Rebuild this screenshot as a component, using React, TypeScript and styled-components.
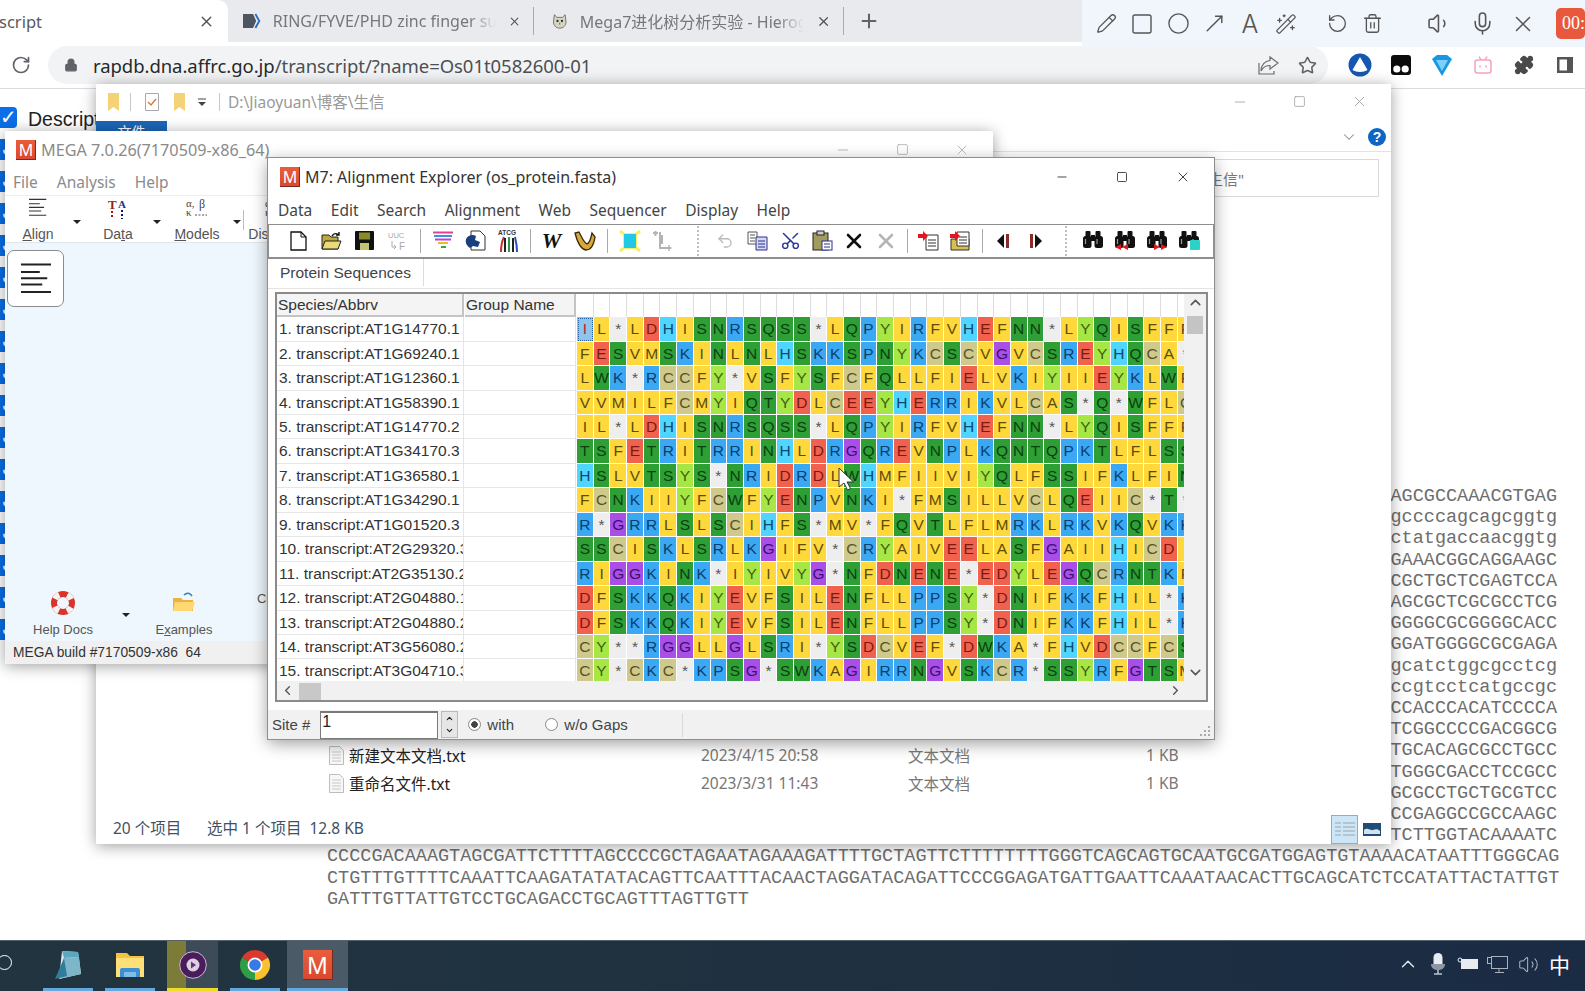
import React from "react";
import styled, { createGlobalStyle } from "styled-components";
import {
  Pencil, Square, Circle, MoveUpRight, WandSparkles, RotateCcw, Trash2, Volume1, Mic, X,
  RotateCw, Lock, Star, Puzzle, Plus, ChevronUp, ChevronDown, ChevronLeft, ChevronRight,
  Scissors, Undo2, Minus, Volume2,
} from "lucide-react";

const UI = `"Noto Sans", "Noto Sans CJK SC", sans-serif`;
const ARIAL = `"Liberation Sans", Arial, sans-serif`;

const GlobalStyle = createGlobalStyle`
  html, body { margin: 0; padding: 0; background: #fff; overflow: hidden; }
  * { box-sizing: border-box; }
`;

const Page = styled.div`
  position: relative;
  width: 1585px;
  height: 991px;
  overflow: hidden;
  display: flex;
  flex-direction: column;
  font-family: ${UI};
  background: #fff;
`;

/* browser chrome */
const TabStrip = styled.div`
  height: 42px;
  flex: none;
  background: #e8eaed;
  display: flex;
  align-items: stretch;
  color: #4d5156;
  font-size: 16px;
`;
const ActiveTab = styled.div`
  width: 228px;
  background: #fff;
  border-top-right-radius: 10px;
  display: flex;
  align-items: center;
  justify-content: space-between;
  padding-right: 13px;
  overflow: hidden;
  font-size: 16.5px;
  span { margin-left: -1px; color: #5a5a5a; }
`;
const Tab = styled.div<{ $w: number }>`
  width: ${(p) => p.$w}px;
  display: flex;
  align-items: center;
  padding: 0 12px 0 15px;
  gap: 12px;
  border-right: 1px solid #a8abb0;
  margin: 7px 0;
  color: #74777c;
  white-space: nowrap;
`;
const TabTitle = styled.span<{ $w: number }>`
  width: ${(p) => p.$w}px;
  overflow: hidden;
  flex: none;
  -webkit-mask-image: linear-gradient(90deg, #000 88%, transparent);
  mask-image: linear-gradient(90deg, #000 88%, transparent);
`;
const NewTab = styled.div`
  width: 50px;
  display: flex;
  align-items: center;
  justify-content: center;
  color: #5f6368;
`;
const RecorderBar = styled.div`
  position: absolute;
  top: 0;
  left: 1082px;
  width: 503px;
  height: 47px;
  background: #f1f5fc;
  display: flex;
  align-items: center;
  padding-left: 6px;
  color: #555;
  z-index: 8;
`;
const RecSlot = styled.div<{ $w?: number }>`
  width: ${(p) => p.$w ?? 36}px;
  flex: none;
  display: flex;
  align-items: center;
  justify-content: center;
  font: 300 25px Inter, sans-serif;
`;
const RecSep = styled.div<{ $l: number; $r: number }>`
  width: 1px;
  height: 22px;
  background: #d5d9e0;
  margin: 0 ${(p) => p.$r}px 0 ${(p) => p.$l}px;
`;
const RecTimer = styled.div`
  margin-left: 10px;
  width: 40px;
  height: 31px;
  border-radius: 5px;
  background: #e8583c;
  color: #fff;
  font: 18px "Liberation Serif", serif;
  display: flex;
  align-items: center;
  padding-left: 6px;
`;
const AddressRow = styled.div`
  height: 47px;
  flex: none;
  display: flex;
  align-items: center;
  background: #fff;
  border-bottom: 1px solid #dadce0;
`;
const ReloadSlot = styled.div`
  width: 48px;
  display: flex;
  justify-content: center;
  padding-right: 6px;
  color: #5f6368;
`;
const UrlPill = styled.div`
  width: 1282px;
  height: 38px;
  border-radius: 19px;
  background: #f1f3f4;
  display: flex;
  align-items: center;
  padding: 0 0 0 16px;
  color: #5f6368;
`;
const UrlText = styled.div`
  margin-left: 15px;
  flex: 1;
  font-size: 18.5px;
  letter-spacing: -0.05px;
  color: #27292c;
  span { color: #4c4f53; }
`;
const PillAction = styled.div<{ $w: number }>`
  width: ${(p) => p.$w}px;
  display: flex;
  justify-content: center;
`;
const ExtGroup = styled.div`
  display: flex;
  margin-left: 11px;
`;
const ExtSlot = styled.div`
  width: 41px;
  display: flex;
  justify-content: center;
  align-items: center;
  color: #4a4a4a;
`;

/* web page behind the windows */
const Content = styled.div`
  flex: 1;
  min-height: 0;
  display: flex;
  overflow: hidden;
`;
const CheckColumn = styled.div`
  width: 327px;
  flex: none;
  padding-top: 18px;
  display: flex;
  flex-direction: column;
  gap: 11px;
`;
const CheckRow = styled.div`
  display: flex;
  align-items: center;
  gap: 11px;
  height: 21px;
  font: 19.5px ${ARIAL};
  color: #222;
`;
const CheckLabel = styled.span`
  margin-top: 4px;
`;
const CheckBox = styled.div`
  width: 17px;
  height: 21px;
  border-radius: 0 4px 4px 0;
  background: #0a6fe8;
  flex: none;
  display: flex;
  align-items: center;
  justify-content: center;
  color: #fff;
`;
const SeqColumn = styled.div`
  width: 1230px;
  padding-top: 397px;
  font: 18.5px/21.2px "Liberation Mono", "Courier New", monospace;
  color: #6e6e6e;
  white-space: pre;
`;
const SeqLine = styled.div<{ $tail?: boolean }>`
  text-align: ${(p) => (p.$tail ? "right" : "left")};
`;
const ClippedHeading = styled.div`
  margin: 26px 0 0 2px;
  font: bold 20px ${ARIAL};
  color: #444;
`;

/* taskbar */
const Taskbar = styled.div`
  height: 51px;
  flex: none;
  background: linear-gradient(90deg, #21343f, #1f3140 50%, #1a2b44);
  border-top: 1px solid #55616a;
  display: flex;
  justify-content: space-between;
`;
const TaskLeft = styled.div`
  display: flex;
`;
const CortanaRing = styled.div`
  width: 15px;
  height: 15px;
  border: 1.3px solid #fff;
  border-radius: 50%;
  margin: 14px 31px 0 -3px;
`;
const TaskSlot = styled.div<{ $w: number; $ml?: number; $line: string; $bg?: string }>`
  width: ${(p) => p.$w}px;
  margin-left: ${(p) => p.$ml ?? 0}px;
  display: flex;
  align-items: center;
  justify-content: center;
  padding-top: 1px;
  background: ${(p) => p.$bg ?? "transparent"};
  border-bottom: 3px solid ${(p) => p.$line};
`;
const Tray = styled.div`
  display: flex;
  align-items: center;
  padding: 0 12px 4px 0;
  color: #e6e9ee;
`;
const TraySlot = styled.div`
  width: 30px;
  display: flex;
  justify-content: center;
  align-items: center;
`;
const ImeGlyph = styled.div`
  font: 21px "Noto Sans CJK SC", sans-serif;
  color: #fff;
  margin-left: 3px;
`;

/* desktop windows */
const Win = styled.div<{ $x: number; $y: number; $w: number; $h: number; $z: number; $shadow?: string }>`
  position: absolute;
  left: ${(p) => p.$x}px;
  top: ${(p) => p.$y}px;
  width: ${(p) => p.$w}px;
  height: ${(p) => p.$h}px;
  z-index: ${(p) => p.$z};
  background: #fff;
  display: flex;
  flex-direction: column;
  box-shadow: ${(p) => p.$shadow ?? "0 2px 14px rgba(0,0,0,.38)"};
`;
const Logo = styled.div<{ $s: number }>`
  width: ${(p) => p.$s}px;
  height: ${(p) => p.$s}px;
  flex: none;
  background: linear-gradient(180deg, #ea5d3c, #d8472f);
  color: #fff;
  font: ${(p) => Math.round(p.$s * 0.78)}px ${UI};
  line-height: ${(p) => p.$s}px;
  text-align: center;
  overflow: hidden;
  box-shadow: inset -1px -1px 0 #7a2a1a;
`;
const CtrlGroup = styled.div<{ $gap: number; $color: string }>`
  display: flex;
  align-items: center;
  gap: ${(p) => p.$gap}px;
  color: ${(p) => p.$color};
`;

/* explorer */
const ExpTitle = styled.div`
  height: 36px;
  flex: none;
  display: flex;
  align-items: center;
  padding: 0 23px 1px 9px;
  color: #999;
  font-size: 15.5px;
`;
const ExpPath = styled.div`
  flex: 1;
`;
const QuickSlot = styled.div<{ $w: number }>`
  width: ${(p) => p.$w}px;
  display: flex;
  justify-content: center;
  align-items: center;
`;
const TitleSep = styled.div`
  width: 1px;
  height: 18px;
  background: #c8c8c8;
`;
const RibbonRow = styled.div`
  height: 32px;
  flex: none;
  display: flex;
  justify-content: space-between;
  align-items: flex-end;
  border-bottom: 1px solid #e3e3e3;
  padding-right: 5px;
`;
const FileTab = styled.div`
  width: 71px;
  height: 30px;
  background: #1c66b8;
  color: #fff;
  text-align: center;
  font-size: 14px;
`;
const RibbonEnd = styled.div`
  display: flex;
  align-items: center;
  gap: 10px;
  margin-bottom: 5px;
  color: #8a8a8a;
`;
const HelpDot = styled.div`
  width: 18px;
  height: 18px;
  border-radius: 50%;
  background: #0c67c4;
  color: #fff;
  font: bold 14px/18px ${ARIAL};
  text-align: center;
`;
const SearchRow = styled.div`
  height: 53px;
  flex: none;
  display: flex;
  justify-content: flex-end;
  align-items: flex-start;
  padding: 7px 12px 0 0;
`;
const SearchBox = styled.div`
  width: 220px;
  height: 38px;
  border: 1px solid #d9d9d9;
  padding-left: 12px;
  display: flex;
  align-items: center;
  color: #777;
  font-size: 15px;
`;
const FileArea = styled.div`
  flex: 1;
  min-height: 0;
  display: flex;
  flex-direction: column;
  justify-content: flex-end;
  padding: 0 0 8px 233px;
`;
const FileRow = styled.div`
  height: 28px;
  display: grid;
  grid-template-columns: 20px 352px 207px 238px 40px;
  align-items: center;
  font-size: 15.5px;
  color: #777;
`;
const FileName = styled.div`
  color: #222;
`;
const ExpStatus = styled.div`
  height: 39px;
  flex: none;
  display: flex;
  align-items: center;
  padding: 5px 6px 0 17px;
  font-size: 15.5px;
  color: #3f5163;
`;
const StatusCell = styled.div<{ $w?: number }>`
  width: ${(p) => (p.$w ? `${p.$w}px` : "auto")};
  flex: ${(p) => (p.$w ? "none" : 1)};
`;
const ViewBtn = styled.div<{ $on?: boolean }>`
  width: 27px;
  height: 29px;
  align-self: flex-end;
  display: flex;
  align-items: center;
  justify-content: center;
  background: ${(p) => (p.$on ? "#cde6f7" : "transparent")};
  border: 1px solid ${(p) => (p.$on ? "#71b7e0" : "transparent")};
`;

/* MEGA main window */
const MegaTitle = styled.div`
  height: 39px;
  flex: none;
  display: flex;
  align-items: center;
  padding: 0 23px 2px 11px;
  gap: 5px;
  color: #8a8a8a;
  font-size: 16.2px;
`;
const GrowText = styled.div`
  flex: 1;
`;
const MegaMenu = styled.div`
  height: 26px;
  flex: none;
  display: flex;
  align-items: center;
  gap: 19px;
  padding: 0 0 2px 8px;
  font-size: 15.5px;
  color: #8b8b8b;
  border-bottom: 1px solid #ededed;
`;
const MegaTools = styled.div`
  height: 47px;
  flex: none;
  display: flex;
  border-bottom: 1px solid #dfe7ec;
`;
const MegaTool = styled.div<{ $w: number; $pr?: number }>`
  width: ${(p) => p.$w}px;
  flex: none;
  position: relative;
  display: flex;
  flex-direction: column;
  align-items: center;
  justify-content: space-between;
  padding: 2px ${(p) => p.$pr ?? 14}px 0 0;
  color: #555;
  font: 14px ${ARIAL};
  u { text-decoration: underline; }
`;
const MegaLabel = styled.div`
  white-space: nowrap;
`;
const DropArrow = styled.div<{ $r?: number }>`
  position: absolute;
  width: 0;
  height: 0;
  right: ${(p) => p.$r ?? 4}px;
  top: 24px;
  border: 4px solid transparent;
  border-top: 4px solid #222;
`;
const MegaSep = styled.div`
  width: 1px;
  height: 20px;
  margin: 14px 2px 0 0;
  background: #bbb;
`;
const MegaBody = styled.div`
  flex: 1;
  min-height: 0;
  background: #eef7fd;
  display: flex;
  flex-direction: column;
  justify-content: space-between;
  padding: 7px 0 0 2px;
`;
const BigButton = styled.div`
  width: 57px;
  height: 57px;
  border: 1.5px solid #8b8b8b;
  border-radius: 7px;
  background: #fff;
  display: flex;
  align-items: center;
  justify-content: center;
`;
const DocTools = styled.div`
  display: flex;
  height: 48px;
  margin-bottom: 4px;
`;
const DocTool = styled(MegaTool)`
  font-size: 13px;
`;
const MegaStatus = styled.div`
  height: 23px;
  flex: none;
  background: #f0f0f0;
  display: flex;
  align-items: center;
  padding-left: 8px;
  font: 13.8px ${ARIAL};
  color: #333;
`;

/* alignment explorer */
const AlignTitle = styled.div`
  height: 40px;
  flex: none;
  display: flex;
  align-items: center;
  padding: 0 23px 3px 12px;
  gap: 5px;
  font-size: 16px;
  color: #333;
`;
const AlignMenu = styled.div`
  height: 26px;
  flex: none;
  display: flex;
  align-items: center;
  gap: 18.5px;
  padding: 0 0 3px 10px;
  font-size: 15.5px;
  color: #444;
`;
const AlignTools = styled.div`
  height: 35px;
  flex: none;
  display: flex;
  align-items: center;
  border: 1.5px solid #8e8e8e;
  border-width: 1.5px 1.5px 2px 1.5px;
  padding: 0 0 1px 13px;
  background: #fff;
`;
const ToolBtn = styled.div<{ $w?: number }>`
  width: ${(p) => p.$w ?? 33}px;
  flex: none;
  display: flex;
  align-items: center;
  justify-content: center;
`;
const ToolSep = styled.div<{ $w?: number }>`
  width: ${(p) => p.$w ?? 12}px;
  flex: none;
  display: flex;
  justify-content: center;
  &::after { content: ""; width: 1px; height: 24px; background: #aaa; }
`;
const Gripper = styled.div<{ $l: number; $r: number }>`
  width: 2px;
  height: 30px;
  flex: none;
  margin: 0 ${(p) => p.$r}px 0 ${(p) => p.$l}px;
  border-left: 2px dotted #bdbdbd;
`;
const TabRow = styled.div`
  height: 30px;
  flex: none;
  display: flex;
  padding: 0 0 2px 2px;
  border-bottom: 1px solid #e4e4e4;
`;
const SheetTab = styled.div`
  width: 154px;
  padding-left: 10px;
  display: flex;
  align-items: center;
  border-right: 1px solid #dcdcdc;
  font: 15.5px ${ARIAL};
  color: #444;
`;
const GridFrame = styled.div`
  margin: 3px 6px 0 7px;
  height: 410px;
  flex: none;
  border: 2px solid #8a8a8a;
  display: flex;
  flex-direction: column;
`;
const GridBody = styled.div`
  height: 387px;
  flex: none;
  display: flex;
  overflow: hidden;
  background: #fff;
`;
const NamesPanel = styled.div`
  width: 299px;
  flex: none;
  display: flex;
  flex-direction: column;
`;
const NameRow = styled.div`
  height: 24.45px;
  flex: none;
  display: grid;
  grid-template-columns: 187px 1fr;
  border-bottom: 1px solid #e6e6e6;
`;
const NameHeader = styled.div`
  height: 23.3px;
  flex: none;
  display: grid;
  grid-template-columns: 187px 1fr;
  gap: 1px;
  background: #fff;
  font: 15.5px/21px ${ARIAL};
  color: #333;
`;
const HeadCell = styled.div`
  padding-left: 1px;
  background: #f4f4f4;
  border-right: 2px solid #c4c4c4;
  border-bottom: 2px solid #c4c4c4;
  overflow: hidden;
`;
const NameCell = styled.div`
  padding-left: 2px;
  font: 15.5px/23px ${ARIAL};
  color: #333;
  white-space: nowrap;
  overflow: hidden;
  border-right: 1px solid #e6e6e6;
`;
const SeqPanel = styled.div`
  flex: 1;
  min-width: 0;
  overflow: hidden;
  padding-left: 1px;
`;
const TickRow = styled.div`
  height: 23.3px;
  display: flex;
`;
const Tick = styled.div`
  width: 16.7px;
  flex: none;
  border-right: 1px solid #dedede;
`;
const SeqRow = styled.div`
  height: 24.45px;
  display: flex;
`;
const Cell = styled.div<{ $bg: string; $fg: string; $focus?: boolean }>`
  width: 16.7px;
  flex: none;
  background: ${(p) => p.$bg};
  color: ${(p) => p.$fg};
  border-right: 1px solid #fff;
  border-bottom: 1px solid #fff;
  font: 15.5px/24px ${ARIAL};
  text-align: center;
  ${(p) => (p.$focus ? "outline: 1px dotted #1f5fa8; outline-offset: -2px;" : "")}
`;
const VScroll = styled.div`
  width: 22px;
  flex: none;
  background: #f1f1f1;
  display: flex;
  flex-direction: column;
  align-items: center;
  justify-content: space-between;
  color: #555;
  position: relative;
`;
const VThumb = styled.div`
  position: absolute;
  top: 22px;
  left: 3px;
  right: 3px;
  height: 18px;
  background: #c4c4c4;
`;
const HScroll = styled.div`
  flex: 1;
  background: #f1f1f1;
  display: flex;
  align-items: center;
  justify-content: space-between;
  padding: 0 23px 0 3px;
  color: #555;
  position: relative;
`;
const HThumb = styled.div`
  position: absolute;
  top: 2px;
  left: 22px;
  width: 22px;
  height: 17px;
  background: #c8c8c8;
`;
const SiteBar = styled.div`
  flex: 1;
  min-height: 0;
  margin-top: 8px;
  background: #f1f1f1;
  display: flex;
  align-items: center;
  padding-left: 4px;
  font: 15px ${ARIAL};
  color: #444;
  overflow: hidden;
`;
const SiteInput = styled.div`
  width: 118px;
  height: 28px;
  margin-left: 10px;
  background: #fff;
  border: 1px solid #7a7a7a;
  border-top-width: 2px;
  padding-left: 1px;
  font-size: 16px;
  color: #222;
`;
const Spinner = styled.div`
  width: 17px;
  height: 27px;
  margin: 0 10px 0 3px;
  display: flex;
  flex-direction: column;
  background: #e6e6e6;
  border: 1px solid #bbb;
  align-items: center;
  justify-content: space-around;
  color: #222;
`;
const Radio = styled.div<{ $on?: boolean }>`
  width: 13px;
  height: 13px;
  margin-right: 6px;
  border-radius: 50%;
  border: 1px solid #888;
  background: ${(p) => (p.$on ? "radial-gradient(circle, #444 0 3px, #fff 3.5px)" : "#fff")};
`;
const RadioLabel = styled.div<{ $w: number }>`
  width: ${(p) => p.$w}px;
  flex: none;
`;
const SiteSep = styled.div`
  width: 1px;
  height: 24px;
  background: #d8d8d8;
`;
const Grip = styled.div`
  margin-left: auto;
  padding: 14px 3px 0 0;
`;
const UprightScissors = styled(Scissors)`
  transform: rotate(-90deg);
`;
const Pointer = styled.svg`
  position: absolute;
  left: 838px;
  top: 467px;
  z-index: 9;
`;

/* data */
const PAL: Record<string, [string, string]> = {
  y: ["#ffd93b", "#5c4c08"],
  g: ["#2e9f35", "#0c400f"],
  b: ["#3aa8f2", "#0a3f6e"],
  c: ["#4fd5ff", "#0b4a6e"],
  r: ["#f0624e", "#7c1a12"],
  l: ["#a6e645", "#3f5f10"],
  t: ["#cfc98c", "#57522a"],
  p: ["#a94fe8", "#3a1170"],
  x: ["#eeeeee", "#555555"],
};
const GROUP: Record<string, string> = {
  I: "y", L: "y", F: "y", V: "y", M: "y", A: "y",
  S: "g", T: "g", N: "g", Q: "g", W: "g",
  R: "b", K: "b", P: "b",
  H: "c", D: "r", E: "r", Y: "l", C: "t", G: "p", "*": "x",
};
const SEQS = [
  "IL*LDHISNRSQSS*LQPYIRFVHEFNN*LYQISFFF",
  "FESVMSKINLNLHSKKSPNYKCSCVGVCSREYHQCA*",
  "LWK*RCCFY*VSFYSFCFQLLFIELVKIYIIEYKLWF",
  "VVMILFCMYIQTYDLCEEYHERRIKVLCAS*Q*WFLC",
  "IL*LDHISNRSQSS*LQPYIRFVHEFNN*LYQISFFF",
  "TSFETRITRRINHLDRGQREVNPLKQNTQPKTLFLSS",
  "HSLVTSYS*NRIDRDLWHMFIIVIYQLFSSIFKLFIN",
  "FCNKIIYFCWFYENPVNKI*FMSILLVCLQEIIC*T*",
  "R*GRRLSLSCIHFS*MV*FQVTLFLMRKLRKVKQVKK",
  "SSCISKLSRLKGIFV*CRYAIVEELASFGAIIHICDI",
  "RIGGKINK*IYIVYG*NFDNENE*EDYLEGQCRNTKF",
  "DFSKKQKIYEVFSILENFLLPPSY*DNIFKKFHIL*K",
  "DFSKKQKIYEVFSILENFLLPPSY*DNIFKKFHIL*K",
  "CY**RGGLLGLSRI*YSDCVEF*DWKA*FHVDCCFCS",
  "CY*CKC*KPSG*SWKAGIRRNGVSKCR*SSYRFGTSM",
];
const NAMES = [
  "AT1G14770.1", "AT1G69240.1", "AT1G12360.1", "AT1G58390.1", "AT1G14770.2",
  "AT1G34170.3", "AT1G36580.1", "AT1G34290.1", "AT1G01520.3", "AT2G29320.3",
  "AT2G35130.2", "AT2G04880.1", "AT2G04880.2", "AT3G56080.2", "AT3G04710.3",
];
const TAILS = [
  "AGCGCCAAACGTGAG", "gccccagcagcggtg", "ctatgaccaacggtg", "GAAACGGCAGGAAGC", "CGCTGCTCGAGTCCA",
  "AGCGCTCGCGCCTCG", "GGGGCGCGGGGCACC", "GGATGGGGCGCGAGA", "gcatctggcgcctcg", "ccgtcctcatgccgc",
  "CCACCCACATCCCCA", "TCGGCCCCGACGGCG", "TGCACAGCGCCTGCC", "TGGGCGACCTCCGCC", "GCGCCTGCTGCGTCC",
  "CCGAGGCCGCCAAGC", "TCTTGGTACAAAATC",
];
const LONG = [
  "CCCCGACAAAGTAGCGATTCTTTTAGCCCCGCTAGAATAGAAAGATTTTGCTAGTTCTTTTTTTTGGGTCAGCAGTGCAATGCGATGGAGTGTAAAACATAATTTGGGCAG",
  "CTGTTTGTTTTCAAATTCAAGATATATACAGTTCAATTTACAACTAGGATACAGATTCCCGGAGATGATTGAATTCAAATAACACTTGCAGCATCTCCATATTACTATTGT",
  "GATTTGTTATTGTCCTGCAGACCTGCAGTTTAGTTGTT",
];

/* small drawings */
const TabFav = () => (
  <svg width="23" height="22" viewBox="0 0 23 22">
    <path d="M0 2h13l4 9-4 9H0z" fill="#4d5560" />
    <path d="M16 2l5 9-5 9" fill="none" stroke="#2a6fb5" strokeWidth="2.4" />
  </svg>
);
const CatFav = () => (
  <svg width="21" height="18" viewBox="0 0 21 18">
    <path d="M3 2l3 3h6l3-3 1 8c0 4-3 7-7 7s-7-3-7-7z" fill="#d7d3c5" stroke="#6a6a5a" transform="translate(3 0)" />
    <circle cx="9.500" cy="9" r="1.300" fill="#333" />
    <circle cx="14.500" cy="9" r="1.300" fill="#333" />
    <path d="M12 11v2" stroke="#555" />
  </svg>
);
const ShareBox = () => (
  <svg width="22" height="22" viewBox="0 0 22 22" fill="none" stroke="#6a6e73" strokeWidth="1.2">
    <path d="M2 9v11h15v-3" />
    <path d="M13 3l8 6-8 6v-3.500C9 11.500 6 13 4 17c0-6 4-10 9-10.500z" />
  </svg>
);
const Gem = () => (
  <svg width="22" height="24" viewBox="0 0 22 24">
    <path d="M1 6l5-4h10l5 4-10 17z" fill="#1597e5" />
    <path d="M5 7h12l-6 11z" fill="#7cd0f7" />
  </svg>
);
const TriCircle = () => (
  <svg width="24" height="24" viewBox="0 0 24 24">
    <circle cx="12" cy="12" r="11.500" fill="#1557b0" />
    <path d="M12 4l7.500 13c-4 2.500-11 2.500-15 0z" fill="#fff" />
  </svg>
);
const MonkeyExt = () => (
  <svg width="20" height="20" viewBox="0 0 20 20">
    <rect width="20" height="20" rx="3" fill="#0c0c0c" />
    <circle cx="5.800" cy="14" r="3.600" fill="#fff" />
    <circle cx="14.200" cy="14" r="3.600" fill="#fff" />
  </svg>
);
const BiliExt = () => (
  <svg width="20" height="20" viewBox="0 0 20 20" fill="none" stroke="#f3a3bd" strokeWidth="1.5">
    <rect x="2" y="5" width="16" height="13" rx="2.500" />
    <path d="M6 1.500L8 5M14 1.500L12 5M7 10.500v2M13 10.500v2" />
  </svg>
);
const SideExt = () => (
  <svg width="18" height="18" viewBox="0 0 18 18">
    <rect x="1" y="1" width="16" height="16" fill="#555" />
    <rect x="3.500" y="3.500" width="7.500" height="11" fill="#fff" />
  </svg>
);
const Notepad = () => (
  <svg width="30" height="32" viewBox="0 0 30 32">
    <path d="M9 2l16 1 3 22-22 5z" fill="#dfe6ea" />
    <path d="M9 2l16 1 1 5-15 1z" fill="#5aa7bf" />
    <path d="M11 9l15-1 2 17-22 5z" fill="#7db6c9" />
    <path d="M2 30l9-21 3 18z" fill="#2f7d9a" />
  </svg>
);
const FolderTask = () => (
  <svg width="30" height="28" viewBox="0 0 30 28">
    <path d="M1 2h11l3 3h14v21H1z" fill="#f5c440" />
    <path d="M1 7h28v19H1z" fill="#ffdf7a" />
    <path d="M5 26v-7a2 2 0 012-2h16a2 2 0 012 2v7h-4v-5H9v5z" fill="#3d8fd1" />
    <rect x="9" y="21" width="12" height="5" fill="#7fbde8" />
  </svg>
);
const PlayerTask = () => (
  <svg width="28" height="28" viewBox="0 0 28 28">
    <circle cx="14" cy="14" r="13.300" fill="#4a1d5a" stroke="#cdb7d6" strokeWidth="1" />
    <circle cx="14" cy="14" r="6.500" fill="#dcd0e2" />
    <path d="M12 10.500l5 3.500-5 3.500z" fill="#6a2f7c" />
  </svg>
);
const ChromeTask = () => (
  <svg width="32" height="32" viewBox="0 0 32 32">
    <path d="M16 16L3 8.500A15 15 0 0129 8.500z" fill="#d9392e" />
    <path d="M16 16L29 8.500A15 15 0 0116 31z" fill="#fbc02d" />
    <path d="M16 16V31A15 15 0 013 8.500z" fill="#2f9e44" />
    <circle cx="16" cy="16" r="7.500" fill="#fff" />
    <circle cx="16" cy="16" r="5.800" fill="#3b78e7" />
  </svg>
);
const TrayMic = () => (
  <svg width="16" height="22" viewBox="0 0 16 22">
    <rect x="3.500" y="0" width="9" height="15" rx="4.500" fill="#e8ecf2" />
    <path d="M1 11c0 4 3 6 7 6s7-2 7-6" fill="#8b96a5" />
    <path d="M8 17v4M4 21h8" stroke="#bcc3cd" strokeWidth="1.500" />
  </svg>
);
const TrayBattery = () => (
  <svg width="22" height="14" viewBox="0 0 22 14">
    <rect x="4" y="2" width="17" height="10" fill="#e8ecf2" />
    <circle cx="3" cy="3" r="2" fill="none" stroke="#e8ecf2" />
  </svg>
);
const TrayNet = () => (
  <svg width="22" height="19" viewBox="0 0 22 19" fill="none" stroke="#a9b1bd">
    <rect x="4.500" y="1.500" width="16" height="12" />
    <rect x="0.500" y="2.500" width="4" height="6" />
    <path d="M12 14v3M8 17.500h9" />
  </svg>
);
const DocIcon = () => (
  <svg width="15" height="19" viewBox="0 0 15 19" fill="none" stroke="#bdbdbd">
    <path d="M.5.5h10l4 4v14H.5z" fill="#f7f7f7" />
    <path d="M3 6h9M3 9h9M3 12h9M3 15h9" stroke="#c9c9c9" />
  </svg>
);
const FolderTabIcon = () => (
  <svg width="13" height="20" viewBox="0 0 13 20"><path d="M1 1h11v18l-5.500-4L1 19z" fill="#f6d277" /></svg>
);
const ChecklistIcon = () => (
  <svg width="14" height="18" viewBox="0 0 14 18" fill="#fff" stroke="#a9a9a9">
    <path d="M.5.5h13v17H.5z" />
    <path d="M3 9l3 3 5-6" stroke="#d9773a" strokeWidth="1.400" fill="none" />
  </svg>
);
const DropMini = () => (
  <svg width="10" height="10" viewBox="0 0 10 10"><path d="M1 2h8" stroke="#444" /><path d="M1 5h8L5 9z" fill="#444" /></svg>
);
const ListViewIcon = () => (
  <svg width="20" height="18" viewBox="0 0 20 18" fill="none" stroke="#9aa3a8">
    <path d="M0 2h6M8 2h12M0 6h6M8 6h12M0 10h6M8 10h12M0 14h6M8 14h12" />
  </svg>
);
const ThumbViewIcon = () => (
  <svg width="18" height="13" viewBox="0 0 18 13">
    <rect width="18" height="13" fill="#1f4d78" />
    <path d="M1 11V7c4-3 6 1 9 0s5-1 7 1v3z" fill="#cfe4ee" />
  </svg>
);
const AlignIcon = ({ s = 1, color = "#333", w = 1.6 }: { s?: number; color?: string; w?: number }) => (
  <svg width={24 * s} height={26 * s} viewBox="0 0 24 26" fill="none" stroke={color} strokeWidth={w}>
    <path d="M0 2h24M0 8h15M0 13h21M0 18h17M0 24h24" />
  </svg>
);
const DataIcon = () => (
  <svg width="22" height="22" viewBox="0 0 22 22">
    <text x="1" y="11" fontFamily="Liberation Serif" fontWeight="bold" fontSize="13" fill="#8d2a1a">T</text>
    <text x="11" y="10" fontFamily="Liberation Serif" fontWeight="bold" fontSize="11" fill="#1a2f8d">A</text>
    <path d="M5 13v8" stroke="#a11" strokeWidth="2" strokeDasharray="2 2" />
    <path d="M15 12v9" stroke="#117" strokeWidth="2" strokeDasharray="2 2" />
  </svg>
);
const ModelsIcon = () => (
  <svg width="22" height="20" viewBox="0 0 22 20">
    <text x="0" y="9" fontFamily="Liberation Serif" fontSize="11" fill="#444">α,</text>
    <text x="13" y="10" fontFamily="Liberation Serif" fontSize="12" fill="#444">β</text>
    <text x="0" y="18" fontFamily="Liberation Serif" fontSize="11" fill="#444">κ</text>
    <path d="M9 17h12" stroke="#555" strokeDasharray="2 1.500" />
  </svg>
);
const LifeRing = () => (
  <svg width="24" height="24" viewBox="0 0 24 24" fill="none" strokeWidth="6">
    <circle cx="12" cy="12" r="9" stroke="#d8342c" />
    <circle cx="12" cy="12" r="9" stroke="#f3f3f3" strokeDasharray="6 8.140" strokeDashoffset="3" transform="rotate(45 12 12)" />
  </svg>
);
const FolderOpen = () => (
  <svg width="24" height="22" viewBox="0 0 24 22">
    <path d="M1 7h8l2 2h10v11H1z" fill="#e8b33f" />
    <path d="M3 11h20l-3 9H1z" fill="#ffd873" />
    <path d="M12 4c3-3 6-2 8 1" fill="none" stroke="#3a7fbf" strokeWidth="1.600" />
  </svg>
);

const NewDoc = () => (
  <svg width="17" height="20" viewBox="0 0 17 20"><path d="M1 1h10l5 5v13H1z" fill="#fff" stroke="#111" strokeWidth="1.300" /><path d="M11 1v5h5" fill="none" stroke="#111" /></svg>
);
const OpenDoc = () => (
  <svg width="21" height="18" viewBox="0 0 21 18">
    <path d="M1 3h7l2 2h7v12H1z" fill="#bfa83a" stroke="#222" />
    <path d="M4 9h16l-3 8H1z" fill="#eadb78" stroke="#222" />
    <path d="M11 4c2-3 5-3 7-1M18 0v3h-3" fill="none" stroke="#111" strokeWidth="1.400" />
  </svg>
);
const Floppy = () => (
  <svg width="19" height="19" viewBox="0 0 19 19">
    <rect width="19" height="19" rx="1" fill="#111" />
    <rect x="4" y="1.500" width="11" height="7" fill="#8a8a2a" />
    <rect x="5" y="12" width="9" height="7" fill="#c4c46a" />
  </svg>
);
const UucIcon = () => (
  <svg width="20" height="20" viewBox="0 0 20 20">
    <text x="0" y="7" fontFamily="Liberation Sans" fontSize="7.500" fill="#aaa">UUC</text>
    <path d="M4 10v6h4M6 14l2 2-2 2" fill="none" stroke="#aaa" />
    <text x="11" y="19" fontFamily="Liberation Sans" fontSize="10" fill="#aaa">F</text>
  </svg>
);
const Rainbow = () => (
  <svg width="22" height="19" viewBox="0 0 22 19" strokeWidth="2">
    <path d="M1 1.500h20" stroke="#e0409a" /><path d="M2 5h18" stroke="#3f8fe0" />
    <path d="M3 8.500h16" stroke="#c040d0" /><path d="M6 12h10" stroke="#e8c020" /><path d="M9 16h5" stroke="#30b040" />
  </svg>
);
const DnaDoc = () => (
  <svg width="21" height="21" viewBox="0 0 21 21">
    <path d="M6 1h9l5 5v14H6z" fill="#fff" stroke="#333" />
    <path d="M1 9c2-4 7-5 10-3l-1 4 5 2-2 5-5-1-3 2c-3-2-5-5-4-9z" fill="#1a3f80" />
  </svg>
);
const AtcgIcon = () => (
  <svg width="22" height="24" viewBox="0 0 22 24">
    <text x="0" y="6" fontFamily="Liberation Sans" fontWeight="bold" fontSize="6.500" fill="#333">ATCG</text>
    <path d="M3 23c0-7 1-11 3-15" fill="none" stroke="#d03030" strokeWidth="2" />
    <path d="M7 23V9" stroke="#222" strokeWidth="2" />
    <path d="M11 23V8" stroke="#2f9a40" strokeWidth="2" />
    <path d="M15 23V9" stroke="#222" strokeWidth="2" />
    <path d="M19 23c0-7-1-11-2-15" fill="none" stroke="#2a50c0" strokeWidth="2" />
  </svg>
);
const WordW = styled.span`
  font: italic 900 22px "Liberation Serif", serif;
  color: #111;
`;
const ArmIcon = () => (
  <svg width="24" height="22" viewBox="0 0 24 22">
    <path d="M2 3c2 8 5 16 11 17 5 0 8-6 9-13l-3-4c-1 5-2 10-5 11-4-2-5-7-8-12z" fill="#d8a93a" stroke="#3a2a10" strokeWidth="1.300" />
  </svg>
);
const CyanBlock = () => (
  <svg width="24" height="24" viewBox="0 0 24 24">
    <path d="M2 2l5 4M22 2l-5 4M2 22l5-4M22 22l-5-4" stroke="#f6ef60" strokeWidth="3" />
    <rect x="5.500" y="4.500" width="13" height="15" fill="#21c8e8" stroke="#f6ef60" />
  </svg>
);
const TreeGrey = () => (
  <svg width="22" height="22" viewBox="0 0 22 22" fill="none" stroke="#b4b4b4" strokeWidth="2">
    <path d="M1 3h5M3.500 1v5M8 2v16h6M10 5v9M19 18h-5" />
    <path d="M17 15v6M14.500 18h5" strokeWidth="1.500" />
  </svg>
);
const CopyIcon = () => (
  <svg width="21" height="20" viewBox="0 0 21 20" fill="#fff" stroke="#28308c">
    <path d="M1 1h9v12H1z" stroke="#555" /><path d="M3 4h5M3 7h5M3 10h5" stroke="#555" />
    <path d="M9 6h11v13H9z" fill="#d6d8f0" /><path d="M11 10h7M11 13h7M11 16h7" />
  </svg>
);
const PasteIcon = () => (
  <svg width="21" height="21" viewBox="0 0 21 21">
    <rect x="1" y="3" width="15" height="17" fill="#a39a5e" stroke="#222" />
    <rect x="5" y="1" width="7" height="4" fill="#ccc" stroke="#222" />
    <rect x="10" y="11" width="10" height="9" fill="#fff" stroke="#28308c" />
    <path d="M12 14h6M12 17h6" stroke="#28308c" />
  </svg>
);
const RedArrowDoc = ({ folder }: { folder?: boolean }) => (
  <svg width="22" height="20" viewBox="0 0 22 20">
    {folder && <path d="M1 8h18v11H1z" fill="#d8c050" stroke="#333" />}
    <path d={folder ? "M7 1h12v14H7z" : "M8 4h12v15H8z"} fill="#fff" stroke="#333" />
    <path d={folder ? "M9 6h8M9 9h8M9 12h8" : "M10 9h8M10 12h8M10 15h8"} stroke="#333" />
    <path d="M0 3h5V0l5 5-5 5V7H0z" fill="#e8141c" />
  </svg>
);
const Step = ({ right }: { right?: boolean }) => (
  <svg width="14" height="14" viewBox="0 0 14 14">
    <path d={right ? "M7 0l7 7-7 7z" : "M7 0L0 7l7 7z"} fill="#111" />
    <rect x={right ? 2 : 9} y="0" width="3" height="14" fill="#8c2a2a" />
  </svg>
);
const Binoculars = ({ mark }: { mark?: "left" | "right" | "cyan" }) => (
  <svg width="22" height="21" viewBox="0 0 22 21">
    <rect x="3.500" y="1" width="5" height="7" rx="1" fill="#111" />
    <rect x="13.500" y="1" width="5" height="7" rx="1" fill="#111" />
    <rect x="1" y="6" width="8.500" height="12" rx="2.500" fill="#111" />
    <rect x="12.500" y="6" width="8.500" height="12" rx="2.500" fill="#111" />
    <rect x="9" y="5" width="4" height="6" fill="#111" />
    <path d="M3.500 9v5M15 9v5" stroke="#999" strokeWidth="1.200" />
    {mark === "left" && <path d="M7 14v6L1 17zM14 14v6l-6-3z" fill="#e8141c" />}
    {mark === "right" && <path d="M8 14v6l6-3zM15 14v6l6-3z" fill="#e8141c" />}
    {mark === "cyan" && <rect x="12" y="10" width="10" height="10" rx="1" fill="#2ad2c8" />}
  </svg>
);

const rowLabel = (i: number) => `${i + 1}. transcript:${NAMES[i]}`;

const App = () => (
  <Page>
    <GlobalStyle />
    <TabStrip>
      <ActiveTab>
        <span>script</span>
        <X size={17} color="#555" />
      </ActiveTab>
      <Tab $w={306}>
        <TabFav />
        <TabTitle $w={223}>RING/FYVE/PHD zinc finger superfamily</TabTitle>
        <X size={17} color="#555" />
      </Tab>
      <Tab $w={310}>
        <CatFav />
        <TabTitle $w={224}>Mega7进化树分析实验 - Hierogly</TabTitle>
        <X size={17} color="#555" />
      </Tab>
      <NewTab><Plus size={22} strokeWidth={2.2} /></NewTab>
    </TabStrip>
    <RecorderBar>
      <RecSlot><Pencil size={21} strokeWidth={1.5} /></RecSlot>
      <RecSlot><Square size={24} strokeWidth={1.4} /></RecSlot>
      <RecSlot><Circle size={23} strokeWidth={1.4} /></RecSlot>
      <RecSlot><MoveUpRight size={25} strokeWidth={1.4} /></RecSlot>
      <RecSlot>A</RecSlot>
      <RecSlot><WandSparkles size={22} strokeWidth={1.4} /></RecSlot>
      <RecSep $l={9} $r={7} />
      <RecSlot $w={35}><RotateCcw size={21} strokeWidth={1.5} /></RecSlot>
      <RecSlot $w={35}><Trash2 size={21} strokeWidth={1.5} /></RecSlot>
      <RecSep $l={9} $r={15} />
      <RecSlot $w={50}><Volume1 size={25} strokeWidth={1.5} /></RecSlot>
      <RecSlot $w={36}><Mic size={25} strokeWidth={1.5} /></RecSlot>
      <RecSlot $w={46}><X size={26} strokeWidth={1.4} /></RecSlot>
      <RecTimer>00:</RecTimer>
    </RecorderBar>
    <AddressRow>
      <ReloadSlot><RotateCw size={20} strokeWidth={2} /></ReloadSlot>
      <UrlPill>
        <Lock size={14} fill="#5f6368" strokeWidth={2} />
        <UrlText>rapdb.dna.affrc.go.jp<span>/transcript/?name=Os01t0582600-01</span></UrlText>
        <PillAction $w={39}><ShareBox /></PillAction>
        <PillAction $w={41}><Star size={19} strokeWidth={2} /></PillAction>
      </UrlPill>
      <ExtGroup>
        <ExtSlot><TriCircle /></ExtSlot>
        <ExtSlot><MonkeyExt /></ExtSlot>
        <ExtSlot><Gem /></ExtSlot>
        <ExtSlot><BiliExt /></ExtSlot>
        <ExtSlot><Puzzle size={20} fill="#4a4a4a" /></ExtSlot>
        <ExtSlot><SideExt /></ExtSlot>
      </ExtGroup>
    </AddressRow>

    <Content>
      <CheckColumn>
        <CheckRow>
          <CheckBox>✓</CheckBox>
          <CheckLabel>Description</CheckLabel>
        </CheckRow>
        {Array.from({ length: 16 }, (_, i) => (
          <CheckRow key={i}>
            <CheckBox>✓</CheckBox>
          </CheckRow>
        ))}
      </CheckColumn>
      <SeqColumn>
        {TAILS.map((t) => (
          <SeqLine $tail key={t}>{t}</SeqLine>
        ))}
        {LONG.map((t) => (
          <SeqLine key={t}>{t}</SeqLine>
        ))}
        <ClippedHeading>CDS</ClippedHeading>
      </SeqColumn>
    </Content>

    <Taskbar>
      <TaskLeft>
        <CortanaRing />
        <TaskSlot $w={50} $line="#62a9e0"><Notepad /></TaskSlot>
        <TaskSlot $w={50} $ml={12} $line="#62a9e0"><FolderTask /></TaskSlot>
        <TaskSlot $w={51} $ml={12} $line="#f2dc2a" $bg="linear-gradient(90deg, #7c7c38 0 19px, #3c4b57 19px)"><PlayerTask /></TaskSlot>
        <TaskSlot $w={50} $ml={12} $line="#62a9e0"><ChromeTask /></TaskSlot>
        <TaskSlot $w={61} $ml={7} $line="#62a9e0" $bg="#4a5b67"><Logo $s={30}>M</Logo></TaskSlot>
      </TaskLeft>
      <Tray>
        <TraySlot><ChevronUp size={22} strokeWidth={1.5} /></TraySlot>
        <TraySlot><TrayMic /></TraySlot>
        <TraySlot><TrayBattery /></TraySlot>
        <TraySlot><TrayNet /></TraySlot>
        <TraySlot><Volume2 size={21} strokeWidth={1.2} color="#a9b1bd" /></TraySlot>
        <TraySlot><ImeGlyph>中</ImeGlyph></TraySlot>
      </Tray>
    </Taskbar>

    {/* file explorer */}
    <Win $x={96} $y={84} $w={1295} $h={760} $z={2}>
      <ExpTitle>
        <QuickSlot $w={16}><FolderTabIcon /></QuickSlot>
        <QuickSlot $w={18}><TitleSep /></QuickSlot>
        <QuickSlot $w={26}><ChecklistIcon /></QuickSlot>
        <QuickSlot $w={28}><FolderTabIcon /></QuickSlot>
        <QuickSlot $w={18}><DropMini /></QuickSlot>
        <QuickSlot $w={17}><TitleSep /></QuickSlot>
        <ExpPath>D:\Jiaoyuan\博客\生信</ExpPath>
        <CtrlGroup $gap={45} $color="#9a9a9a">
          <Minus size={16} strokeWidth={1.2} />
          <Square size={13} strokeWidth={1.4} />
          <X size={17} strokeWidth={1.2} />
        </CtrlGroup>
      </ExpTitle>
      <RibbonRow>
        <FileTab>文件</FileTab>
        <RibbonEnd>
          <ChevronDown size={18} strokeWidth={1.4} />
          <HelpDot>?</HelpDot>
        </RibbonEnd>
      </RibbonRow>
      <SearchRow>
        <SearchBox>搜索"生信"</SearchBox>
      </SearchRow>
      <FileArea>
        <FileRow>
          <DocIcon />
          <FileName>新建文本文档.txt</FileName>
          <div>2023/4/15 20:58</div>
          <div>文本文档</div>
          <div>1 KB</div>
        </FileRow>
        <FileRow>
          <DocIcon />
          <FileName>重命名文件.txt</FileName>
          <div>2023/3/31 11:43</div>
          <div>文本文档</div>
          <div>1 KB</div>
        </FileRow>
      </FileArea>
      <ExpStatus>
        <StatusCell $w={94}>20 个项目</StatusCell>
        <StatusCell>选中 1 个项目&nbsp;&nbsp;12.8 KB</StatusCell>
        <ViewBtn $on><ListViewIcon /></ViewBtn>
        <ViewBtn><ThumbViewIcon /></ViewBtn>
      </ExpStatus>
    </Win>

    {/* MEGA main */}
    <Win $x={5} $y={131} $w={988} $h={533} $z={3}>
      <MegaTitle>
        <Logo $s={20}>M</Logo>
        <GrowText>MEGA 7.0.26(7170509-x86_64)</GrowText>
        <CtrlGroup $gap={45} $color="#aaa">
          <Minus size={16} strokeWidth={1.2} />
          <Square size={13} strokeWidth={1.4} />
          <X size={16} strokeWidth={1.2} />
        </CtrlGroup>
      </MegaTitle>
      <MegaMenu>
        <span>File</span>
        <span>Analysis</span>
        <span>Help</span>
      </MegaMenu>
      <MegaTools>
        <MegaTool $w={80}>
          <AlignIcon s={0.72} />
          <MegaLabel><u>A</u>lign</MegaLabel>
          <DropArrow />
        </MegaTool>
        <MegaTool $w={80}>
          <DataIcon />
          <MegaLabel>Da<u>t</u>a</MegaLabel>
          <DropArrow />
        </MegaTool>
        <MegaTool $w={78}>
          <ModelsIcon />
          <MegaLabel><u>M</u>odels</MegaLabel>
          <DropArrow $r={2} />
        </MegaTool>
        <MegaSep />
        <MegaTool $w={60} $pr={1}>
          <ModelsIcon />
          <MegaLabel>Distance</MegaLabel>
        </MegaTool>
      </MegaTools>
      <MegaBody>
        <BigButton><AlignIcon s={1.25} color="#222" w={1.7} /></BigButton>
        <DocTools>
          <DocTool $w={120} $pr={8}>
            <LifeRing />
            <MegaLabel>Help Docs</MegaLabel>
            <DropArrow $r={-3} />
          </DocTool>
          <DocTool $w={114} $pr={0}>
            <FolderOpen />
            <MegaLabel>E<u>x</u>amples</MegaLabel>
          </DocTool>
          <DocTool $w={76} $pr={0}>
            <MegaLabel>Citation</MegaLabel>
          </DocTool>
        </DocTools>
      </MegaBody>
      <MegaStatus>MEGA build #7170509-x86&nbsp;&nbsp;64</MegaStatus>
    </Win>

    {/* alignment explorer */}
    <Win $x={268} $y={158} $w={946} $h={581} $z={4} $shadow="0 0 0 1px #8f8f8f, 0 4px 16px rgba(0,0,0,.4)">
      <AlignTitle>
        <Logo $s={20}>M</Logo>
        <GrowText>M7: Alignment Explorer (os_protein.fasta)</GrowText>
        <CtrlGroup $gap={47} $color="#222">
          <Minus size={14} strokeWidth={1.4} />
          <Square size={12} strokeWidth={1.6} />
          <X size={16} strokeWidth={1.3} />
        </CtrlGroup>
      </AlignTitle>
      <AlignMenu>
        {["Data", "Edit", "Search", "Alignment", "Web", "Sequencer", "Display", "Help"].map((m) => (
          <span key={m}>{m}</span>
        ))}
      </AlignMenu>
      <AlignTools>
        <ToolBtn><NewDoc /></ToolBtn>
        <ToolBtn><OpenDoc /></ToolBtn>
        <ToolBtn><Floppy /></ToolBtn>
        <ToolBtn><UucIcon /></ToolBtn>
        <ToolSep />
        <ToolBtn><Rainbow /></ToolBtn>
        <ToolBtn><DnaDoc /></ToolBtn>
        <ToolBtn><AtcgIcon /></ToolBtn>
        <ToolSep $w={10} />
        <ToolBtn><WordW>W</WordW></ToolBtn>
        <ToolBtn><ArmIcon /></ToolBtn>
        <ToolSep />
        <ToolBtn><CyanBlock /></ToolBtn>
        <ToolBtn><TreeGrey /></ToolBtn>
        <Gripper $l={18} $r={10} />
        <ToolBtn $w={32.6}><Undo2 size={18} color="#bbb" strokeWidth={1.8} /></ToolBtn>
        <ToolBtn $w={32.6}><CopyIcon /></ToolBtn>
        <ToolBtn $w={32}><UprightScissors size={21} color="#2a3a9a" strokeWidth={1.7} /></ToolBtn>
        <ToolBtn $w={32}><PasteIcon /></ToolBtn>
        <ToolBtn $w={32}><X size={24} color="#111" strokeWidth={2.6} /></ToolBtn>
        <ToolBtn $w={32}><X size={24} color="#b5b5b5" strokeWidth={2.6} /></ToolBtn>
        <ToolSep $w={11} />
        <ToolBtn $w={32}><RedArrowDoc /></ToolBtn>
        <ToolBtn $w={32}><RedArrowDoc folder /></ToolBtn>
        <ToolSep $w={11} />
        <ToolBtn $w={31}><Step /></ToolBtn>
        <ToolBtn $w={31}><Step right /></ToolBtn>
        <Gripper $l={15} $r={10} />
        <ToolBtn $w={32}><Binoculars /></ToolBtn>
        <ToolBtn $w={32}><Binoculars mark="left" /></ToolBtn>
        <ToolBtn $w={32}><Binoculars mark="right" /></ToolBtn>
        <ToolBtn $w={32}><Binoculars mark="cyan" /></ToolBtn>
      </AlignTools>
      <TabRow>
        <SheetTab>Protein Sequences</SheetTab>
      </TabRow>
      <GridFrame>
        <GridBody>
          <NamesPanel>
            <NameHeader>
              <HeadCell>Species/Abbrv</HeadCell>
              <HeadCell>Group Name</HeadCell>
            </NameHeader>
            {NAMES.map((_, i) => (
              <NameRow key={i}>
                <NameCell>{rowLabel(i)}</NameCell>
                <NameCell />
              </NameRow>
            ))}
          </NamesPanel>
          <SeqPanel>
            <TickRow>
              {Array.from({ length: 37 }, (_, i) => <Tick key={i} />)}
            </TickRow>
            {SEQS.map((seq, r) => (
              <SeqRow key={r}>
                {seq.split("").map((ch, c) => {
                  const focus = r === 0 && c === 0;
                  const [bg, fg] = PAL[GROUP[ch]];
                  return (
                    <Cell key={c} $bg={focus ? "#8fc4ec" : bg} $fg={focus ? "#c02030" : fg} $focus={focus}>
                      {ch}
                    </Cell>
                  );
                })}
              </SeqRow>
            ))}
          </SeqPanel>
          <VScroll>
            <ChevronUp size={17} strokeWidth={2.2} />
            <VThumb />
            <ChevronDown size={17} strokeWidth={2.2} />
          </VScroll>
        </GridBody>
        <HScroll>
          <ChevronLeft size={15} strokeWidth={2.2} />
          <HThumb />
          <ChevronRight size={15} strokeWidth={2.2} />
        </HScroll>
      </GridFrame>
      <SiteBar>
        Site #
        <SiteInput>1</SiteInput>
        <Spinner>
          <ChevronUp size={9} strokeWidth={3} />
          <ChevronDown size={9} strokeWidth={3} />
        </Spinner>
        <Radio $on />
        <RadioLabel $w={58}>with</RadioLabel>
        <Radio />
        <RadioLabel $w={118}>w/o Gaps</RadioLabel>
        <SiteSep />
        <Grip>
          <svg width="12" height="12" viewBox="0 0 12 12" fill="#aaa">
            <rect x="9" y="1" width="2" height="2" /><rect x="5" y="5" width="2" height="2" />
            <rect x="9" y="5" width="2" height="2" /><rect x="1" y="9" width="2" height="2" />
            <rect x="5" y="9" width="2" height="2" /><rect x="9" y="9" width="2" height="2" />
          </svg>
        </Grip>
      </SiteBar>
    </Win>

    <Pointer width="16" height="24" viewBox="0 0 16 24">
      <path d="M1 1v19l5-4 3.500 7 3-1.500L9 15h6.500z" fill="#fff" stroke="#333" strokeWidth="1" />
    </Pointer>
  </Page>
);

export default App;
